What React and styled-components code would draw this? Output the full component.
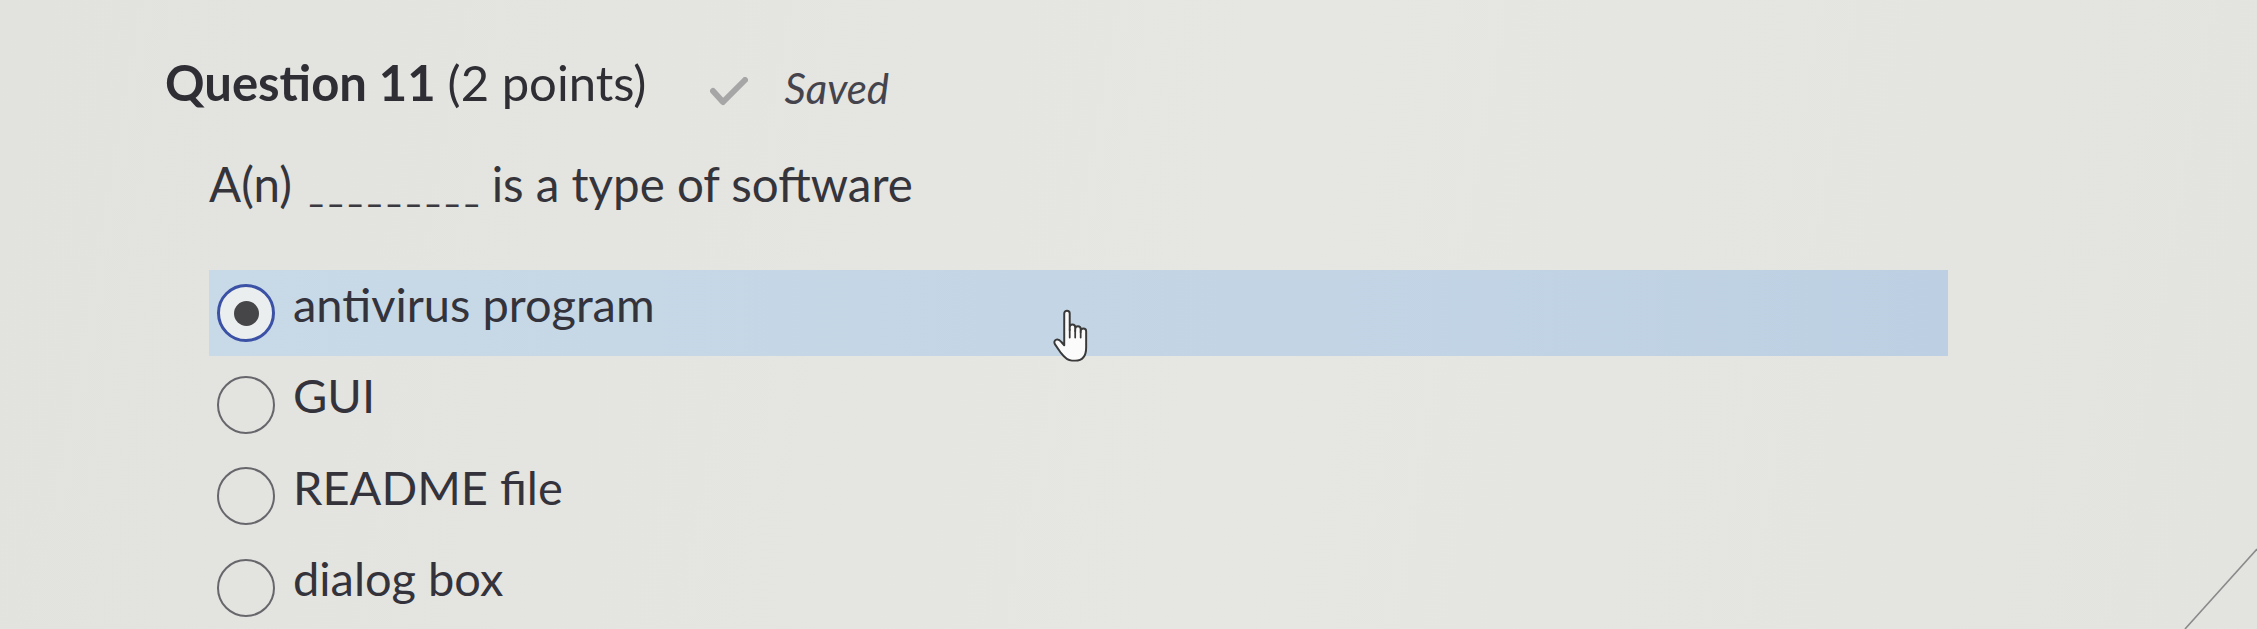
import React from "react";
import styled, { createGlobalStyle } from "styled-components";

const Global = createGlobalStyle`
  html, body { margin: 0; padding: 0; }
  body {
    background: #e4e4e1;
    width: 2257px;
    height: 629px;
    overflow: hidden;
    font-family: Lato, "Noto Sans", sans-serif;
    color: #35343b;
  }
`;

const Page = styled.main`
  position: relative;
  box-sizing: border-box;
  width: 2257px;
  height: 629px;
  padding: 53px 0 0 165px;
  background: linear-gradient(100deg, #e2e2df 0%, #e6e6e3 55%, #e3e3e0 100%);
`;

const Header = styled.header`
  display: flex;
  align-items: baseline;
  height: 60px;
`;

const Title = styled.h1`
  margin: 0;
  font-size: 49px;
  line-height: 1.2;
  font-weight: 700;
  color: #2f2e34;
  white-space: nowrap;
`;

const Points = styled.span`
  font-weight: 400;
`;

const SavedWrap = styled.div`
  display: flex;
  align-items: baseline;
  margin-left: 64px;
  gap: 36px;
`;

const Check = styled.svg`
  width: 38px;
  height: 30px;
  align-self: center;
  transform: translateY(7px);
`;

const SavedText = styled.span`
  font-size: 42px;
  font-style: italic;
  color: #45444c;
  transform: translateY(3px);
`;

const Prompt = styled.p`
  margin: 42px 0 0 44px;
  font-size: 47.5px;
  line-height: 1.2;
  white-space: nowrap;
`;

const Blank = styled.span`
  display: inline-block;
  margin: 0 8px 0 17px;
  font-size: 32px;
  font-weight: 700;
  letter-spacing: 4.5px;
  color: #3a3940;
`;

const Options = styled.ul`
  list-style: none;
  margin: 58px 0 0 44px;
  padding: 0;
  width: 1739px;
  display: flex;
  flex-direction: column;
  gap: 5.5px;
`;

const Option = styled.li`
  position: relative;
  display: flex;
  align-items: center;
  gap: 18px;
  height: 86px;
  padding-left: 8px;
  background: ${(p) =>
    p.$selected ? "linear-gradient(90deg, #c8d9e7 0%, #c3d5e5 60%, #bdd0e3 100%)" : "transparent"};
`;

const Radio = styled.span`
  box-sizing: border-box;
  flex: none;
  width: 58px;
  height: 58px;
  border-radius: 50%;
  border: ${(p) => (p.$checked ? "3px solid #3a51a6" : "2px solid #67666b")};
  background: ${(p) => (p.$checked ? "#ebeeee" : "transparent")};
  display: flex;
  align-items: center;
  justify-content: center;
`;

const Dot = styled.span`
  width: 25px;
  height: 25px;
  border-radius: 50%;
  background: #464649;
`;

const Label = styled.span`
  font-size: 47px;
  line-height: 1.2;
  padding-bottom: 18px;
  color: #34333b;
  white-space: nowrap;
`;

const Cursor = styled.svg`
  position: absolute;
  left: 842px;
  top: 38px;
  width: 44px;
  height: 57px;
`;

const EdgeLine = styled.svg`
  position: absolute;
  right: 0;
  bottom: 0;
  width: 80px;
  height: 90px;
`;

const options = ["antivirus program", "GUI", "README file", "dialog box"];

export default function App() {
  return (
    <>
      <Global />
      <Page>
        <Header>
          <Title>
            Question 11 <Points>(2 points)</Points>
          </Title>
          <SavedWrap>
            <Check viewBox="0 0 38 30">
              <polyline
                points="3,14 13,25 35,3"
                fill="none"
                stroke="#a6a6a6"
                strokeWidth="6"
                strokeLinecap="round"
                strokeLinejoin="round"
              />
            </Check>
            <SavedText>Saved</SavedText>
          </SavedWrap>
        </Header>
        <Prompt>
          A(n)<Blank>_________</Blank>is a type of software
        </Prompt>
        <Options>
          {options.map((o, i) => (
            <Option key={o} $selected={i === 0}>
              <Radio $checked={i === 0}>{i === 0 && <Dot />}</Radio>
              <Label>{o}</Label>
              {i === 0 && (
                <Cursor viewBox="0 0 20 26">
                  <path
                    d="M6 15 V2.5 A1.25 1.25 0 0 1 8.5 2.5 V10 V8.8 A1.25 1.25 0 0 1 11 8.8 V10.5 V9.6 A1.25 1.25 0 0 1 13.5 9.6 V11 V10.6 A1.25 1.25 0 0 1 16 10.6 V18 C16 21.5 14.5 24 11 24 H9.5 C7.5 24 6 22.5 4.5 20.5 L1.8 16.6 C1.2 15.7 1.5 14.7 2.4 14.4 C3.3 14.1 4 14.6 4.6 15.4 L6 17 Z"
                    fill="#fbfbfb"
                    stroke="#3a3a3a"
                    strokeWidth="0.9"
                    strokeLinejoin="round"
                  />
                  <path
                    d="M8.5 10 V13.5 M11 10.5 V13.5 M13.5 11 V13.5"
                    stroke="#3a3a3a"
                    strokeWidth="0.8"
                    strokeLinecap="round"
                  />
                </Cursor>
              )}
            </Option>
          ))}
        </Options>
        <EdgeLine viewBox="0 0 80 90">
          <line x1="8" y1="90" x2="80" y2="10" stroke="#8a8a8a" strokeWidth="1.6" />
        </EdgeLine>
      </Page>
    </>
  );
}
